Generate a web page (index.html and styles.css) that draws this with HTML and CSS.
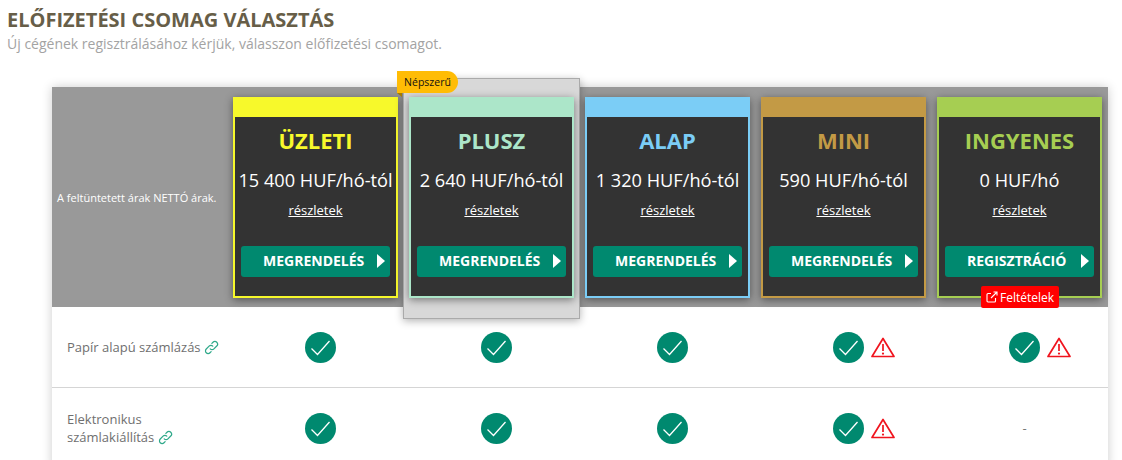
FILE: index.html
```html
<!DOCTYPE html>
<html lang="hu">
<head>
  <meta charset="UTF-8">
  <title>Előfizetési csomag választás</title>
  <link rel="stylesheet" href="styles.css">
</head>
<body>
  <svg class="icon-defs" width="0" height="0">
    <symbol id="check" viewBox="0 0 31 31">
      <circle cx="15.500" cy="15.500" r="15.500" fill="#00896f"/>
      <path d="M6.500 16.500l6 6L24.500 9" fill="none" stroke="#fff" stroke-width="1.300"/>
    </symbol>
    <symbol id="warn" viewBox="0 0 24 21">
      <path d="M12 1.500L23 19.500H1z" fill="#fff" stroke="#f0141e" stroke-width="1.700" stroke-linejoin="round"/>
      <path d="M12 7v7" stroke="#f0141e" stroke-width="1.700"/>
      <circle cx="12" cy="16.600" r="1.100" fill="#f0141e"/>
    </symbol>
    <symbol id="chain" viewBox="0 0 16 16">
      <g fill="none" stroke="#2fa98a" stroke-width="1.300" stroke-linecap="round">
        <path d="M6.600 9.400a2.800 2.800 0 0 0 4 0l3-3a2.800 2.800 0 0 0-4-4L8.400 3.600"/>
        <path d="M9.400 6.600a2.800 2.800 0 0 0-4 0l-3 3a2.800 2.800 0 0 0 4 4l1.200-1.200"/>
      </g>
    </symbol>
  </svg>

  <h1 class="page-title">Előfizetési csomag választás</h1>
  <p class="page-sub">Új cégének regisztrálásához kérjük, válasszon előfizetési csomagot.</p>

  <div class="plans">
    <div class="plans-head">
      <div class="net-note">A feltüntetett árak NETTÓ árak.</div>

      <div class="plan-col">
        <div class="plan-card plan-uzleti">
          <div class="plan-top"></div>
          <div class="plan-body">
            <div class="plan-name">ÜZLETI</div>
            <div class="plan-price">15 400 HUF/hó-tól</div>
            <a class="plan-more" href="#">részletek</a>
            <a class="plan-btn" href="#">MEGRENDELÉS</a>
          </div>
        </div>
      </div>

      <div class="plan-col plan-col-popular">
        <div class="popular-bg"></div>
        <div class="popular-tag">Népszerű</div>
        <div class="plan-card plan-plusz">
          <div class="plan-top"></div>
          <div class="plan-body">
            <div class="plan-name">PLUSZ</div>
            <div class="plan-price">2 640 HUF/hó-tól</div>
            <a class="plan-more" href="#">részletek</a>
            <a class="plan-btn" href="#">MEGRENDELÉS</a>
          </div>
        </div>
      </div>

      <div class="plan-col">
        <div class="plan-card plan-alap">
          <div class="plan-top"></div>
          <div class="plan-body">
            <div class="plan-name">ALAP</div>
            <div class="plan-price">1 320 HUF/hó-tól</div>
            <a class="plan-more" href="#">részletek</a>
            <a class="plan-btn" href="#">MEGRENDELÉS</a>
          </div>
        </div>
      </div>

      <div class="plan-col">
        <div class="plan-card plan-mini">
          <div class="plan-top"></div>
          <div class="plan-body">
            <div class="plan-name">MINI</div>
            <div class="plan-price">590 HUF/hó-tól</div>
            <a class="plan-more" href="#">részletek</a>
            <a class="plan-btn" href="#">MEGRENDELÉS</a>
          </div>
        </div>
      </div>

      <div class="plan-col">
        <div class="plan-card plan-ingyenes">
          <div class="plan-top"></div>
          <div class="plan-body">
            <div class="plan-name">INGYENES</div>
            <div class="plan-price">0 HUF/hó</div>
            <a class="plan-more" href="#">részletek</a>
            <a class="plan-btn" href="#">REGISZTRÁCIÓ</a>
          </div>
        </div>
        <a class="terms-tag" href="#">
          <svg width="12" height="12" viewBox="0 0 12 12" fill="none" stroke="#fff" stroke-width="1.100"><path d="M9.500 7v3a1 1 0 0 1-1 1H2a1 1 0 0 1-1-1V3.500a1 1 0 0 1 1-1h3"/><path d="M7.500 1H11v3.500M11 1L5 7"/></svg>
          Feltételek
        </a>
      </div>
    </div>

    <div class="feature-row">
      <div class="feature-name">Papír alapú számlázás <svg class="chain"><use href="#chain"/></svg></div>
      <div class="feature-cell"><svg class="ic-check"><use href="#check"/></svg></div>
      <div class="feature-cell"><svg class="ic-check"><use href="#check"/></svg></div>
      <div class="feature-cell"><svg class="ic-check"><use href="#check"/></svg></div>
      <div class="feature-cell"><svg class="ic-check"><use href="#check"/></svg><svg class="ic-warn"><use href="#warn"/></svg></div>
      <div class="feature-cell"><svg class="ic-check"><use href="#check"/></svg><svg class="ic-warn"><use href="#warn"/></svg></div>
    </div>

    <div class="feature-row">
      <div class="feature-name">Elektronikus<br>számlakiállítás <svg class="chain"><use href="#chain"/></svg></div>
      <div class="feature-cell"><svg class="ic-check"><use href="#check"/></svg></div>
      <div class="feature-cell"><svg class="ic-check"><use href="#check"/></svg></div>
      <div class="feature-cell"><svg class="ic-check"><use href="#check"/></svg></div>
      <div class="feature-cell"><svg class="ic-check"><use href="#check"/></svg><svg class="ic-warn"><use href="#warn"/></svg></div>
      <div class="feature-cell feature-none">-</div>
    </div>
  </div>
</body>
</html>
```

FILE: styles.css
```css
html, body {
  margin: 0;
  height: 460px;
  overflow: hidden;
  background: #fff;
}

body {
  font-family: "Open Sans", sans-serif;
  color: #333;
}

.icon-defs {
  display: block;
  height: 0;
}

.page-title {
  margin: 8px 0 0 7px;
  font-size: 20px;
  line-height: 24px;
  font-weight: 700;
  text-transform: uppercase;
  color: #675e48;
}

.page-sub {
  margin: 2px 0 0 7px;
  font-size: 14px;
  line-height: 20px;
  color: #a3a3a3;
}

.plans {
  margin: 33px 14px 0 52px;
  background: #fff;
  box-shadow: 0 0 10px rgba(0,0,0,0.2);
}

.plans-head {
  display: grid;
  grid-template-columns: repeat(6, 176px);
  height: 220px;
  background: #999;
}

.net-note {
  align-self: center;
  padding-left: 5px;
  font-size: 11px;
  color: #fff;
}

.plan-col {
  position: relative;
  padding: 10px 6px 9px 5px;
}

.popular-bg {
  position: absolute;
  top: -9px;
  left: -1px;
  right: 0;
  bottom: -12px;
  background: #d8d8d8;
  border: 1px solid #aaa;
  box-shadow: 0 2px 8px rgba(0,0,0,0.3);
}

.popular-tag {
  position: absolute;
  top: -16px;
  left: -7px;
  z-index: 2;
  width: 61px;
  height: 22px;
  line-height: 22px;
  text-align: center;
  font-size: 10.500px;
  color: #111;
  background: #ffbc05;
  border-radius: 0 11px 11px 0;
}

.popular-tag::after {
  content: "";
  position: absolute;
  left: 0;
  top: 22px;
  border-top: 4px solid #a67c00;
  border-left: 5px solid transparent;
}

.plan-card {
  position: relative;
  display: flex;
  flex-direction: column;
  height: 100%;
  box-sizing: border-box;
  border: 2px solid var(--plan);
  box-shadow: 0 2px 8px rgba(0,0,0,0.45);
  --plan: #fff;
}

.plan-uzleti { --plan: #f7f92b; }
.plan-plusz { --plan: #ace6c9; }
.plan-alap { --plan: #7bcdf6; }
.plan-mini { --plan: #c39a45; }
.plan-ingyenes { --plan: #a6ce52; }

.plan-top {
  height: 18px;
  background: var(--plan);
}

.plan-body {
  flex: 1;
  display: flex;
  flex-direction: column;
  align-items: center;
  background: #333;
  padding: 0 2px;
}

.plan-name {
  margin-top: 8px;
  font-size: 22px;
  line-height: 30px;
  font-weight: 700;
  color: var(--plan);
}

.plan-price {
  margin-top: 13px;
  font-size: 18.200px;
  line-height: 24px;
  white-space: nowrap;
  color: #fff;
}

.plan-more {
  margin-top: 9px;
  font-size: 13px;
  line-height: 18px;
  color: #fff;
  text-decoration: underline;
}

.plan-btn {
  position: relative;
  box-sizing: border-box;
  width: 149px;
  height: 31px;
  margin-top: 27px;
  padding-left: 22px;
  line-height: 30px;
  font-size: 14px;
  font-weight: 700;
  color: #fff;
  text-decoration: none;
  background: #00896f;
  border-radius: 3px;
}

.plan-btn::after {
  content: "";
  position: absolute;
  right: 5px;
  top: 8px;
  border-left: 8px solid #fff;
  border-top: 7.500px solid transparent;
  border-bottom: 7.500px solid transparent;
}

.terms-tag {
  position: absolute;
  left: 49px;
  bottom: -1px;
  z-index: 2;
  display: flex;
  align-items: center;
  gap: 2px;
  width: 78px;
  height: 22px;
  box-sizing: border-box;
  padding-left: 5px;
  font-size: 12px;
  color: #fff;
  text-decoration: none;
  background: #f00;
  border-radius: 2px;
}

.feature-row {
  display: grid;
  grid-template-columns: repeat(6, 176px);
  height: 80px;
  border-bottom: 1px solid #d5d5d5;
}

.feature-name {
  align-self: center;
  padding-left: 15px;
  font-size: 13px;
  line-height: 18px;
  color: #6f6f6f;
}

.feature-cell {
  display: flex;
  align-items: center;
  justify-content: center;
  padding-left: 9px;
}

.feature-none {
  color: #777;
  font-size: 13px;
}

.ic-check {
  width: 31px;
  height: 31px;
}

.ic-warn {
  width: 24px;
  height: 21px;
  margin-left: 7px;
  margin-right: -31px;
}

.chain {
  width: 15px;
  height: 15px;
  vertical-align: -3px;
}
```
